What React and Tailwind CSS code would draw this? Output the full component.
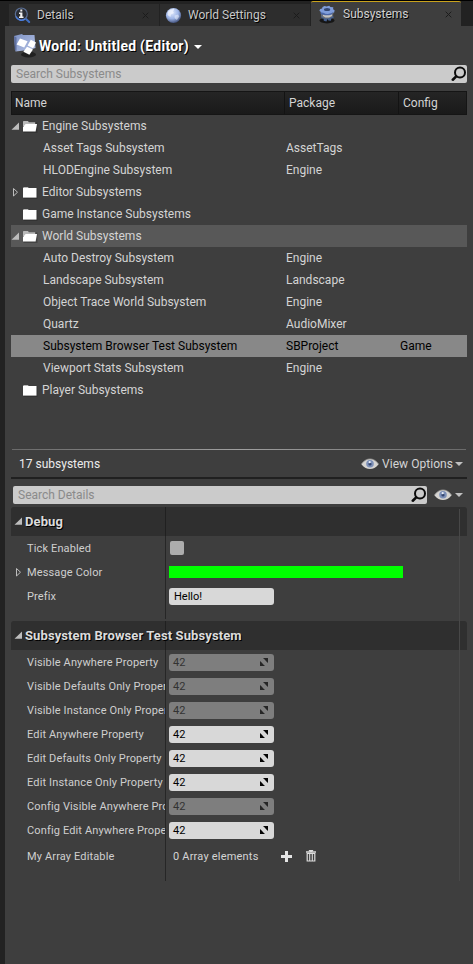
import React from "react";

const Close = ({ className = "" }) => (
  <svg className={className} width="7" height="7" viewBox="0 0 7 7" stroke="#1c1c1c" strokeWidth="1">
    <path d="M.7.7l5.6 5.6M6.3.7L.7 6.3" />
  </svg>
);

const DetailsIcon = () => (
  <svg width="18" height="17" viewBox="0 0 18 17">
    <path d="M11.500 11.500l3.700 3.500" stroke="#3f6fc4" strokeWidth="2" strokeLinecap="round" />
    <circle cx="7.300" cy="7" r="6" fill="#2b2e35" stroke="#5a6e94" strokeWidth="1.200" />
    <path d="M2 9.500a6 6 0 0 0 9 2.600" stroke="#4c7fe0" strokeWidth="1.400" fill="none" />
    <path d="M6.300 2.500h2v2h-2zM5 5.500h3.400v4h1.100V11H5V9.500h1.200V7H5z" fill="#f2f2f2" />
  </svg>
);

const GlobeIcon = () => (
  <svg width="17" height="17" viewBox="0 0 17 17">
    <defs>
      <radialGradient id="globe" cx=".4" cy=".3" r=".75">
        <stop offset="0" stopColor="#dfe8fb" />
        <stop offset=".55" stopColor="#9db4e6" />
        <stop offset="1" stopColor="#35436c" />
      </radialGradient>
    </defs>
    <circle cx="8.500" cy="8.500" r="7.600" fill="url(#globe)" />
    <path d="M3 4.800C5 2 8 1.600 9.400 2.200L8 4.400l1 1.500-3 1.600-.6 2.500L2.500 8z" fill="#f4f7ff" opacity=".7" />
    <path d="M9.500 8.500l3.600-1 1.200 2-2.400 3.400-2.200-1.600z" fill="#f4f7ff" opacity=".5" />
  </svg>
);

const GearIcon = () => (
  <svg width="18" height="19" viewBox="0 0 18 19">
    <ellipse cx="9" cy="15.600" rx="7.600" ry="2.800" fill="#161616" />
    <path d="M3 9.500h12l.6 3.500-2.200.4-.6 2.400-2.400-.4-.8-1.400-1.200 2.400-2.600-.6-.2-2-2.200-.6z" fill="#45608f" />
    <path d="M2.600 7.500l1 4.300 3.200 1.600 4.600-.2 3.200-1.700 1-4z" fill="#6d7076" />
    <path d="M5 9l2.500.8h3.800L14 9v2l-3 1.500H7.500L5 11z" fill="#c3c2c0" />
    <path d="M6.600.9l2 .5 2.600-.7 1.300 1.400 2.800.2-.2 1.900 1.500 1-.4 2.200-2.300.5-1.500 1.600-2.300-.4-1.500.7-2.300-1.100-3 .2-.4-1.900-1.500-1.200.8-1.900 1.900-.5.400-1.500z" fill="#7f9ddb" />
    <ellipse cx="9.100" cy="4.500" rx="3.100" ry="1.500" fill="#34466f" />
    <path d="M2.300 7.300l3.100.5 1.900 1 2.400.1 3.300-.6 2-1.100-.8 2-3 1-4.200 0-3.900-1z" fill="#4a66a6" />
  </svg>
);

const WorldIcon = () => (
  <svg width="24" height="25" viewBox="0 0 24 25">
    <defs>
      <linearGradient id="box" x1="0" y1="0" x2="1" y2="1">
        <stop offset="0" stopColor="#7f93c4" />
        <stop offset="1" stopColor="#b4c2e6" />
      </linearGradient>
    </defs>
    <ellipse cx="15.500" cy="21.500" rx="7.500" ry="3" fill="#181818" opacity=".75" />
    <path d="M1 3l8-2 1 1h11.500l1 13-7 2-13 1.500z" fill="url(#box)" />
    <path d="M1 3l2.500 1.600V18L1.800 17z" fill="#5f70a0" />
    <path d="M7 5.500l7.600 2.800-3.400 6.200L3.600 11.500zM17.800 6.800l5.200 2.800-2.900 5.600-5.500-2.600zM14 13.800l6 2.600-3.600 5.400-6-3z" fill="#fff" />
  </svg>
);

const Search = ({ className = "" }) => (
  <svg className={className} width="16" height="16" viewBox="0 0 16 16" fill="none" stroke="#0b0b0b">
    <circle cx="9" cy="6.600" r="5" strokeWidth="2" />
    <path d="M5.200 10.400L1.800 13.700" strokeWidth="2.600" strokeLinecap="round" />
  </svg>
);

const Eye = () => (
  <svg width="18" height="12" viewBox="0 0 18 12">
    <path d="M.4 6.200C3 2.400 6 1 9 1s6 1.400 8.600 5.200C15 9.800 12 11 9 11S3 9.800.4 6.200z" fill="#d6d4d1" />
    <path d="M.4 6.200C3 2.400 6 1 9 1s6 1.400 8.600 5.200" fill="none" stroke="#9b9b9b" strokeWidth=".8" />
    <circle cx="9" cy="5.800" r="3.800" fill="#7d90b8" />
    <circle cx="9" cy="6" r="1.600" fill="#34466f" />
    <circle cx="8.700" cy="4.200" r="1.100" fill="#e7edf8" />
  </svg>
);

const Caret = ({ color = "#c0c0c0", className = "" }) => (
  <svg className={className} width="8" height="4" viewBox="0 0 8 4">
    <path d="M0 0h8L4 4z" fill={color} />
  </svg>
);

const Folder = ({ open }) => (
  <svg width="16" height="13" viewBox="0 0 16 13">
    <path d="M1.500 2.500h14V13h-14z" fill="#1c1c1c" opacity=".35" />
    {open ? (
      <>
        <path d="M1 1.600L1.600 1H6l.8 1.200h6.400V6H1z" fill="#b9b9b9" />
        <path d="M1 11.600V7l2.600-2.900H15L13.600 11.600H1z" fill="#fff" />
      </>
    ) : (
      <>
        <path d="M1.600 1H6l.8 1.200H1z" fill="#b9b9b9" />
        <path d="M1 2h13.500v9.600H1z" fill="#fff" />
      </>
    )}
  </svg>
);

const Expander = ({ state }) => (
  <svg className="shrink-0" width="8" height="9" viewBox="0 0 8 9">
    {state === "open" && <path d="M8 .5v7.200H.5z" fill="#bdbdbd" />}
    {state === "closed" && <path d="M2.500 .5v7.500L6.500 4.200z" fill="none" stroke="#bdbdbd" strokeWidth="1" />}
  </svg>
);

const Spin = ({ dim }) => (
  <svg width="8" height="8" viewBox="0 0 8 8" fill={dim ? "#262626" : "#050505"}>
    <path d="M3 0h5v5L6.400 3.600 4.600 1.600zM0 3l1.600 1.400L3.400 6.400 5 8H0z" />
  </svg>
);

const tree = [
  { n: "Engine Subsystems", g: "open" },
  { n: "Asset Tags Subsystem", p: "AssetTags" },
  { n: "HLODEngine Subsystem", p: "Engine" },
  { n: "Editor Subsystems", g: "closed" },
  { n: "Game Instance Subsystems", g: "none" },
  { n: "World Subsystems", g: "open", hover: true },
  { n: "Auto Destroy Subsystem", p: "Engine" },
  { n: "Landscape Subsystem", p: "Landscape" },
  { n: "Object Trace World Subsystem", p: "Engine" },
  { n: "Quartz", p: "AudioMixer" },
  { n: "Subsystem Browser Test Subsystem", p: "SBProject", c: "Game", sel: true },
  { n: "Viewport Stats Subsystem", p: "Engine" },
  { n: "Player Subsystems", g: "none" },
];

const props = [
  ["Visible Anywhere Property", true],
  ["Visible Defaults Only Property", true],
  ["Visible Instance Only Property", true],
  ["Edit Anywhere Property", false],
  ["Edit Defaults Only Property", false],
  ["Edit Instance Only Property", false],
  ["Config Visible Anywhere Property", true],
  ["Config Edit Anywhere Property", false],
];

const shadow = "[text-shadow:1px_1px_0_#000]";

const Tab = ({ icon, label }) => (
  <div className="flex h-[22px] w-[150px] items-center bg-[#2d2d2d] pl-[5px]">
    <div className="flex w-[19px] shrink-0">{icon}</div>
    <span className={"ml-[4px] text-[#c8c8c8] " + shadow}>{label}</span>
    <Close className="ml-auto mr-[10px]" />
  </div>
);

const SectionHeader = ({ title }) => (
  <div className="flex h-[29px] items-center rounded-t-[3px] bg-[#2f2f2f]">
    <div className="flex h-full w-[155px] shrink-0 items-center border-r border-[#202020] pl-[3px]">
      <Expander state="open" />
      <span className={"ml-[3px] whitespace-nowrap text-[13px] font-bold tracking-[0.1px] text-[#dcdcdc] " + shadow}>{title}</span>
    </div>
  </div>
);

const Prop = ({ label, children, expander, h = "h-[24px]" }) => (
  <div className={"flex " + h}>
    <div className="flex w-[155px] shrink-0 items-center overflow-hidden border-r border-[#262626] pl-[3px]">
      <div className="w-[13px] shrink-0">{expander && <Expander state="closed" />}</div>
      <span className="whitespace-nowrap pt-[2px] text-[11px] tracking-[0.14px] text-[#cfcfcf]">{label}</span>
    </div>
    <div className="flex items-center pl-[3px]">{children}</div>
  </div>
);

export default function App() {
  return (
    <div className="flex h-[964px] w-[473px] flex-col overflow-hidden border-t border-black bg-[#222222] font-['Roboto','Liberation_Sans',sans-serif] text-[12px] leading-[16px] text-[#d4d4d4]">
      <div className="flex h-[25px] items-end gap-px pl-[9px]">
        <Tab icon={<DetailsIcon />} label="Details" />
        <Tab icon={<GlobeIcon />} label="World Settings" />
        <div className="flex h-[25px] w-[150px] items-center rounded-t-[2px] border-t border-[#c9a21c] bg-[#3e3e3e] pl-[7px]">
          <GearIcon />
          <span className={"ml-[7px] text-[#d0d0d0] " + shadow}>Subsystems</span>
          <Close className="ml-auto mr-[9px]" />
        </div>
      </div>

      <div className="ml-[5px] flex flex-1 flex-col bg-[#3e3e3e] pl-[6px] pr-[6px]">
        <div className="flex h-[39px] items-center pl-[2px]">
          <WorldIcon />
          <span className={"ml-[2px] whitespace-nowrap text-[14px] font-bold tracking-[0.26px] text-white " + shadow}>World: Untitled (Editor)</span>
          <Caret color="#fff" className="ml-[5px] mt-[2px]" />
        </div>

        <div className="flex h-[18px] items-center rounded-[2px] bg-[#cbcbcb] pl-[5px] text-[#8a8a8a]">
          <span>Search Subsystems</span>
          <Search className="ml-auto" />
        </div>

        <div className="mt-[8px] flex h-[24px] border border-[#151515] bg-linear-to-b from-[#252525] to-[#1a1a1a] text-[#d4d4d4]">
          <div className="flex w-[273px] items-center border-r border-[#131313] pl-[3px]">Name</div>
          <div className="flex w-[114px] items-center border-r border-[#131313] pl-[4px]">Package</div>
          <div className="flex items-center pl-[4px]">Config</div>
        </div>

        <div className="flex h-[334px] flex-col">
          {tree.map((r) => (
            <div
              key={r.n}
              className={
                "flex h-[22px] shrink-0 items-center " +
                (r.sel ? "bg-[#888888] text-black" : r.hover ? "bg-[#585858]" : "")
              }
            >
              <div className="flex w-[275px] items-center">
                {r.g ? (
                  <>
                    <Expander state={r.g} />
                    <div className="ml-[3px] mr-[4px]">
                      <Folder open={r.g === "open"} />
                    </div>
                  </>
                ) : (
                  <div className="w-[32px]" />
                )}
                <span className="whitespace-nowrap">{r.n}</span>
              </div>
              <div className="w-[114px]">{r.p}</div>
              <div>{r.c}</div>
            </div>
          ))}
        </div>

        <div className="mx-px h-px bg-linear-to-r from-[#6a6a6a] via-[#a0a0a0] to-[#6a6a6a]" />
        <div className="flex h-[27px] items-center pl-[8px] pr-[4px] pt-px">
          <span className="text-[#ececec]">17 subsystems</span>
          <div className="ml-auto flex items-center">
            <Eye />
            <span className="ml-[3px] tracking-[0.05px]">View Options</span>
            <Caret className="ml-[2px]" />
          </div>
        </div>
        <div className="h-[2px] bg-[#202020]" />

        <div className="mt-[7px] flex h-[18px] items-center pl-[2px]">
          <div className="flex h-[18px] w-[414px] items-center rounded-[2px] bg-[#cbcbcb] pl-[5px] text-[#8a8a8a]">
            <span>Search Details</span>
            <Search className="ml-auto" />
          </div>
          <div className="ml-[7px]">
            <Eye />
          </div>
          <Caret className="ml-[3px]" />
        </div>

        <div className="relative mt-[3px]">
          <SectionHeader title="Debug" />
          <Prop label="Tick Enabled">
            <div className="ml-px h-[14px] w-[14px] rounded-[2px] bg-[#adadad]" />
          </Prop>
          <Prop label="Message Color" expander>
            <div className="h-[12px] w-[234px] bg-[#00ff00]" />
          </Prop>
          <Prop label="Prefix">
            <div className="flex h-[17px] w-[105px] items-center rounded-[3px] bg-[#d8d8d8] pl-[5px] pt-px text-[11px] text-black">Hello!</div>
          </Prop>
          <div className="h-[11px] w-[155px] border-r border-[#262626]" />
          <div className="h-[2px]" />
          <SectionHeader title="Subsystem Browser Test Subsystem" />
          {props.map(([label, dim]) => (
            <Prop key={label} label={label}>
              <div
                className={
                  "flex h-[17px] w-[105px] items-center justify-between rounded-[3px] pl-[4px] pr-[6px] text-[11px] " +
                  (dim ? "bg-[#7e7e7e] text-[#333]" : "bg-[#d8d8d8] text-black")
                }
              >
                <span className="pt-px">42</span>
                <Spin dim={dim} />
              </div>
            </Prop>
          ))}
          <Prop label="My Array Editable" h="h-[28px]">
            <span className="ml-[4px] w-[86px] whitespace-nowrap pt-px text-[11px] tracking-[0.2px]">0 Array elements</span>
            <svg className="ml-[22px]" width="11" height="11" viewBox="0 0 11 11">
              <path d="M4 0h3v4h4v3H7v4H4V7H0V4h4z" fill="#e4e4e4" />
            </svg>
            <svg className="ml-[14px]" width="10" height="12" viewBox="0 0 10 12">
              <path d="M3.500 1V.5h3V1M0 2h10" stroke="#dcdcdc" strokeWidth="1.300" fill="none" />
              <path d="M1.200 3.500h7.600V11H1.200z" fill="none" stroke="#dcdcdc" strokeWidth="1.200" />
              <path d="M3.700 4v7M6.300 4v7" stroke="#dcdcdc" strokeWidth="1.100" />
            </svg>
          </Prop>
          <div className="h-[11px] w-[155px] border-r border-[#262626]" />
          <div className="absolute right-[7px] top-[2px] bottom-0 w-px bg-[#484848]" />
        </div>
      </div>
    </div>
  );
}
